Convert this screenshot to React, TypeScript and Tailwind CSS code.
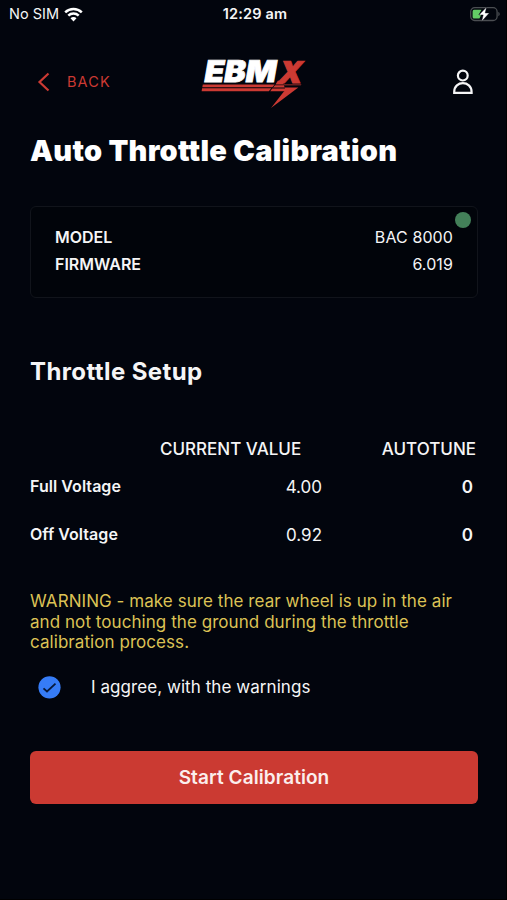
import React from "react";

function WifiIcon() {
  return (
    <svg className="ml-[5px] h-[15px] w-[19px]" viewBox="0 0 19 15" fill="none" stroke="#fff" strokeWidth="2.5">
      <path d="M1.2 5.3C5.9 .8 13.1 .8 17.8 5.3" />
      <path d="M4.3 8.7C7.2 5.9 11.8 5.9 14.7 8.7" />
      <path d="M9.5 14.4 6.5 11.3C8.1 9.7 10.9 9.7 12.5 11.3Z" fill="#fff" stroke="none" />
    </svg>
  );
}

function BatteryIcon() {
  return (
    <svg className="h-[17px] w-[32px]" viewBox="0 0 32 17" fill="none">
      <rect x="1.7" y="1.7" width="26.4" height="12.8" rx="4" stroke="#4b4e52" strokeWidth="1.3" />
      <path d="M29.3 6C31.2 6.6 31.2 9.6 29.3 10.2Z" fill="#4b4e52" />
      <path d="M5 3.8H12.5L9.5 9H12L10.5 12.6H5Q3.6 12.6 3.6 11V5.4Q3.6 3.8 5 3.8Z" fill="#64ce66" />
      <path d="M17.6 1 10 8.9H14.2L12.6 15.6 20.3 7H16.2Z" fill="#fff" stroke="#02050d" strokeWidth="0.4" />
    </svg>
  );
}

function Logo() {
  return (
    <svg className="h-[66px] w-[116px]" viewBox="200 50 116 66">
      <g transform="translate(203 83) skewX(-10)" fontFamily="Inter, sans-serif" fontSize="30" fontWeight="900">
        <text x="0" y="0" textLength="72" lengthAdjust="spacingAndGlyphs" fill="#fff" stroke="#fff" strokeWidth="0.8">EBM</text>
      </g>
      <g transform="translate(276.5 83.5) skewX(-14)" fontFamily="Inter, sans-serif" fontSize="30" fontWeight="900">
        <text x="0" y="0" textLength="24" lengthAdjust="spacingAndGlyphs" fill="#cc3a33" stroke="#cc3a33" strokeWidth="0.9">X</text>
      </g>
      <path d="M202.8 85.4H274.6L272.4 88.2H202.3Z M202.1 89.3H271.4L268.8 92.2H201.6Z" fill="#cc3a33" />
      <path d="M278 81.5 275.5 85.4H301.5L300.8 86.2H275L273 88.4H298.3L271 109 283.5 93 284.5 92.2H270.2L272.2 89.6H285L283 83.5Z" fill="#cc3a33" />
    </svg>
  );
}

function UserIcon() {
  return (
    <svg className="h-[28px] w-[22px]" viewBox="0 0 22 28" fill="none" stroke="#f5f5f6" strokeWidth="2.2">
      <circle cx="10.8" cy="7.6" r="4.9" />
      <path d="M2.2 24.8V23.9C2.2 12.3 19.6 12.3 19.6 23.9V24.8Z" />
    </svg>
  );
}

function InfoLine({ label, value }: { label: string; value: string }) {
  return (
    <div className="flex h-[27px] items-center justify-between text-[16px]">
      <span className="font-semibold">{label}</span>
      <span className="tracking-[0.1px]">{value}</span>
    </div>
  );
}

function VoltageRow({ label, value }: { label: string; value: string }) {
  return (
    <div className="flex h-12 items-center pr-[5px]">
      <span className="w-[192px] pb-[3px] text-[16px] font-semibold tracking-[0.05px]">{label}</span>
      <span className="w-[100px] pt-[1px] text-right text-[17px]">{value}</span>
      <span className="flex-1 pt-[1px] text-right text-[17px] font-semibold">0</span>
    </div>
  );
}

export default function App() {
  return (
    <main className="h-[900px] w-[507px] overflow-hidden border-r border-b border-black bg-[#02050d] font-['Inter',sans-serif] text-[#f5f5f6]">
      <div className="grid h-7 grid-cols-3 items-center pr-[5px] pl-[9px] text-[14.5px]">
        <div className="flex items-center">
          <span>No SIM</span>
          <WifiIcon />
        </div>
        <span className="text-center font-semibold tracking-[0.2px]">12:29 am</span>
        <div className="flex justify-end">
          <BatteryIcon />
        </div>
      </div>

      <header className="flex h-[98px] items-center pt-[10px] pr-[32px] pl-[37px]">
        <button className="flex w-[163px] items-center text-[#cc3a33]">
          <svg className="mr-[17px] h-[20px] w-[13px]" viewBox="0 0 13 20" fill="none" stroke="#cc3a33" strokeWidth="2.2">
            <path d="M11.5 1.5 2.5 10 11.5 18.5" />
          </svg>
          <span className="text-[14.5px] tracking-[1.1px]">BACK</span>
        </button>
        <Logo />
        <div className="ml-auto">
          <UserIcon />
        </div>
      </header>

      <section className="pr-[28px] pl-[30px]">
        <h1 className="h-20 pt-[7px] text-[29px] leading-[36px] font-black tracking-[0.26px] text-white">Auto Throttle Calibration</h1>

        <div className="relative h-[92px] rounded-[6px] border border-[#11141b] bg-[#01040a] pt-[16px] pr-[24px] pl-[24px]">
          <InfoLine label="MODEL" value="BAC 8000" />
          <InfoLine label="FIRMWARE" value="6.019" />
          <span className="absolute top-[5px] right-[6px] size-4 rounded-full bg-[#438059]" />
        </div>

        <h2 className="mt-[58px] text-[24px] leading-[32px] font-bold tracking-[0.4px]">Throttle Setup</h2>

        <div className="mt-[50px] flex h-[24px] items-center justify-between pr-[2px] pl-[130px] text-[17px] font-medium">
          <span>CURRENT VALUE</span>
          <span>AUTOTUNE</span>
        </div>
        <div className="mt-[1px]">
          <VoltageRow label="Full Voltage" value="4.00" />
          <VoltageRow label="Off Voltage" value="0.92" />
        </div>

        <p className="mt-[32px] text-[17px] leading-[20.5px] tracking-[0.06px] text-[#dcc255]">
          WARNING - make sure the rear wheel is up in the air
          <br />
          and not touching the ground during the throttle
          <br />
          calibration process.
        </p>

        <label className="mt-[23px] flex h-6 items-center pl-[8px] text-[17px]">
          <svg className="mr-[30px] size-[23px]" viewBox="0 0 23 23" fill="none">
            <circle cx="11.5" cy="11.3" r="11.1" fill="#367cf6" />
            <path d="M5.5 12.3 9 15.5 17.5 7.7" stroke="#071a3c" strokeWidth="1.8" />
          </svg>
          <span className="tracking-[0.06px]">I aggree, with the warnings</span>
        </label>

        <button className="mt-[51px] h-[53px] w-full rounded-[6px] bg-[#cb3a32] pt-[2px] text-[19px] font-semibold tracking-[0.08px] text-[#fbeeed]">Start Calibration</button>
      </section>
    </main>
  );
}
